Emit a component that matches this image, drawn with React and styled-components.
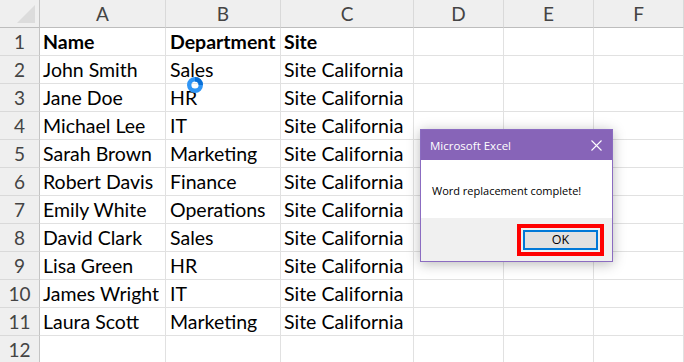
import styled, {createGlobalStyle} from "styled-components";

const GlobalStyle=createGlobalStyle`
  html, body {
    margin:0;
    padding:0;
    background:#ffffff;
    overflow:hidden;
  }
  body {
    font-family: Lato, "Liberation Sans", sans-serif;
  }
`;

const Sheet=styled.div`
  position:relative;
  width:684px;
  height:362px;
  overflow:hidden;
  display:grid;
  grid-template-columns:40px 126px 115px 133px 90px 90px 90px;
  grid-auto-rows:28px;
  font-size:19.5px;
`;

const Corner=styled.div`
  position:relative;
  background:#efefef;
  border-right:1px solid #c4c4c4;
  border-bottom:1px solid #bdbdbd;
  &::after{
    content:"";
    position:absolute;
    left:17px;
    top:5px;
    width:18px;
    height:18px;
    background:#dcdcdc;
    clip-path:polygon(100% 0,100% 100%,0 100%);
  }
`;

const ColHead=styled.div`
  background:#efefef;
  border-right:1px solid #d9d9d9;
  border-bottom:1px solid #bdbdbd;
  color:#444444;
  font-size:19px;
  display:flex;
  align-items:center;
  justify-content:center;
`;

const RowHead=styled.div`
  background:#efefef;
  border-right:1px solid #c4c4c4;
  border-bottom:1px solid #d9d9d9;
  color:#444444;
  font-size:19px;
  display:flex;
  align-items:center;
  justify-content:center;
`;

const Cell=styled.div`
  border-right:1px solid #e1e1e1;
  border-bottom:1px solid #e1e1e1;
  padding-left:${(p)=>p.$pad}px;
  display:flex;
  align-items:center;
  white-space:nowrap;
  overflow:hidden;
  color:#000000;
  font-weight:${(p)=>(p.$bold ? 700 : 400)};
`;

const Dialog=styled.div`
  position:absolute;
  left:420px;
  top:129px;
  width:193px;
  height:133px;
  box-sizing:border-box;
  border:1px solid #8b6cc1;
  box-shadow:0 2px 12px rgba(0,0,0,0.28);
  display:flex;
  flex-direction:column;
  font-family:"Open Sans", "Noto Sans", sans-serif;
`;

const TitleBar=styled.div`
  height:30px;
  background:#8764b8;
  color:#ffffff;
  font-size:11.5px;
  display:flex;
  align-items:center;
  justify-content:space-between;
  padding:0 10px 0 9px;
`;

const Message=styled.div`
  height:58px;
  background:#ffffff;
  font-size:11px;
  color:#000000;
  display:flex;
  align-items:center;
  padding-left:11px;
  padding-top:2px;
  box-sizing:border-box;
`;

const Footer=styled.div`
  flex:1;
  background:#f0f0f0;
  display:flex;
  align-items:center;
  justify-content:flex-end;
  padding-right:8px;
`;

const Highlight=styled.div`
  border:4px solid #ff0000;
  padding:2px;
  display:flex;
`;

const OkButton=styled.button`
  width:75px;
  height:20px;
  box-sizing:border-box;
  border:2px solid #0078d7;
  background:#e1e1e1;
  font-family:"Open Sans", "Noto Sans", sans-serif;
  font-size:12.5px;
  color:#000000;
  padding:0;
  display:flex;
  align-items:center;
  justify-content:center;
`;

const Busy=styled.svg`
  position:absolute;
  left:186px;
  top:76px;
`;

const cols=["A","B","C","D","E","F"];
const pads=[3,4,3,3,3,3];
const rows=[
  ["Name","Department","Site"],
  ["John Smith","Sales","Site California"],
  ["Jane Doe","HR","Site California"],
  ["Michael Lee","IT","Site California"],
  ["Sarah Brown","Marketing","Site California"],
  ["Robert Davis","Finance","Site California"],
  ["Emily White","Operations","Site California"],
  ["David Clark","Sales","Site California"],
  ["Lisa Green","HR","Site California"],
  ["James Wright","IT","Site California"],
  ["Laura Scott","Marketing","Site California"],
  ["","",""],
];

export default function App(){
  return(
    <>
      <GlobalStyle/>
      <Sheet>
        <Corner/>
        {cols.map((c)=>(<ColHead key={c}>{c}</ColHead>))}
        {rows.map((r,i)=>(
          <>
            <RowHead key={"r"+i}>{i+1}</RowHead>
            {cols.map((c,j)=>(
              <Cell key={c+i} $pad={pads[j]} $bold={i===0}>{r[j] || ""}</Cell>
            ))}
          </>
        ))}

        <Busy width="18" height="18" viewBox="0 0 18 18">
          <circle cx="9" cy="9" r="5.8" fill="none" stroke="#2f95f5" strokeWidth="4.4"/>
          <path d="M9 3.2 A5.8 5.8 0 0 1 14.8 9" fill="none" stroke="#0a6fd6" strokeWidth="4.4"/>
        </Busy>

        <Dialog>
          <TitleBar>
            <span>Microsoft Excel</span>
            <svg width="11" height="11" viewBox="0 0 11 11">
              <path d="M0.5 0.5 L10.5 10.5 M10.5 0.5 L0.5 10.5" stroke="#ffffff" strokeWidth="1.1"/>
            </svg>
          </TitleBar>
          <Message>Word replacement complete!</Message>
          <Footer>
            <Highlight>
              <OkButton>OK</OkButton>
            </Highlight>
          </Footer>
        </Dialog>
      </Sheet>
    </>
  );
}
